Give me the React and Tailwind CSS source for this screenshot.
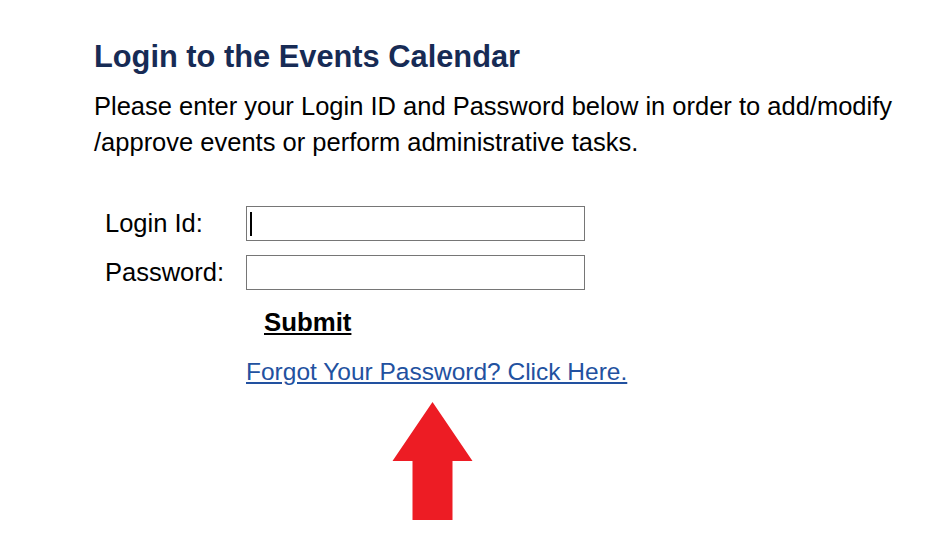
export default function App() {
  return (
    <div className="w-[949px] h-[534px] bg-white overflow-hidden" style={{ fontFamily: '"Liberation Sans", Arial, sans-serif' }}>
      <div className="pl-[94px] pt-[39px]">
        <h1 className="text-[30.8px] leading-[36px] font-bold text-[#172b55]">Login to the Events Calendar</h1>
        <p className="mt-[13px] text-[25.5px] leading-[36px] text-black w-[840px]">
          Please enter your Login ID and Password below in order to add/modify /approve events or perform administrative tasks.
        </p>
        <div className="mt-[46px] grid grid-cols-[152px_339px] gap-y-[14px] items-center">
          <div className="pl-[11px] text-[25.5px] leading-[35px] text-black">Login Id:</div>
          <div className="relative h-[35px] border border-[#767676] bg-white">
            <div className="absolute left-[3px] top-[5px] w-[2px] h-[24px] bg-black" />
          </div>
          <div className="pl-[11px] text-[25.5px] leading-[35px] text-black">Password:</div>
          <div className="h-[35px] border border-[#767676] bg-white" />
        </div>
        <div className="pl-[170px] mt-[14px] text-[25.8px] leading-[36px] font-bold underline text-black">Submit</div>
        <div className="pl-[152px] mt-[14px] text-[24.5px] leading-[36px] underline text-[#2251a0]">Forgot Your Password? Click Here.</div>
        <div className="pl-[298px] mt-[12px]">
          <svg width="81" height="120" viewBox="0 0 81 120">
            <polygon points="40.5,0 80.5,59 60.5,59 60.5,118 20.5,118 20.5,59 0.5,59" fill="#ed1c24" />
          </svg>
        </div>
      </div>
    </div>
  );
}
